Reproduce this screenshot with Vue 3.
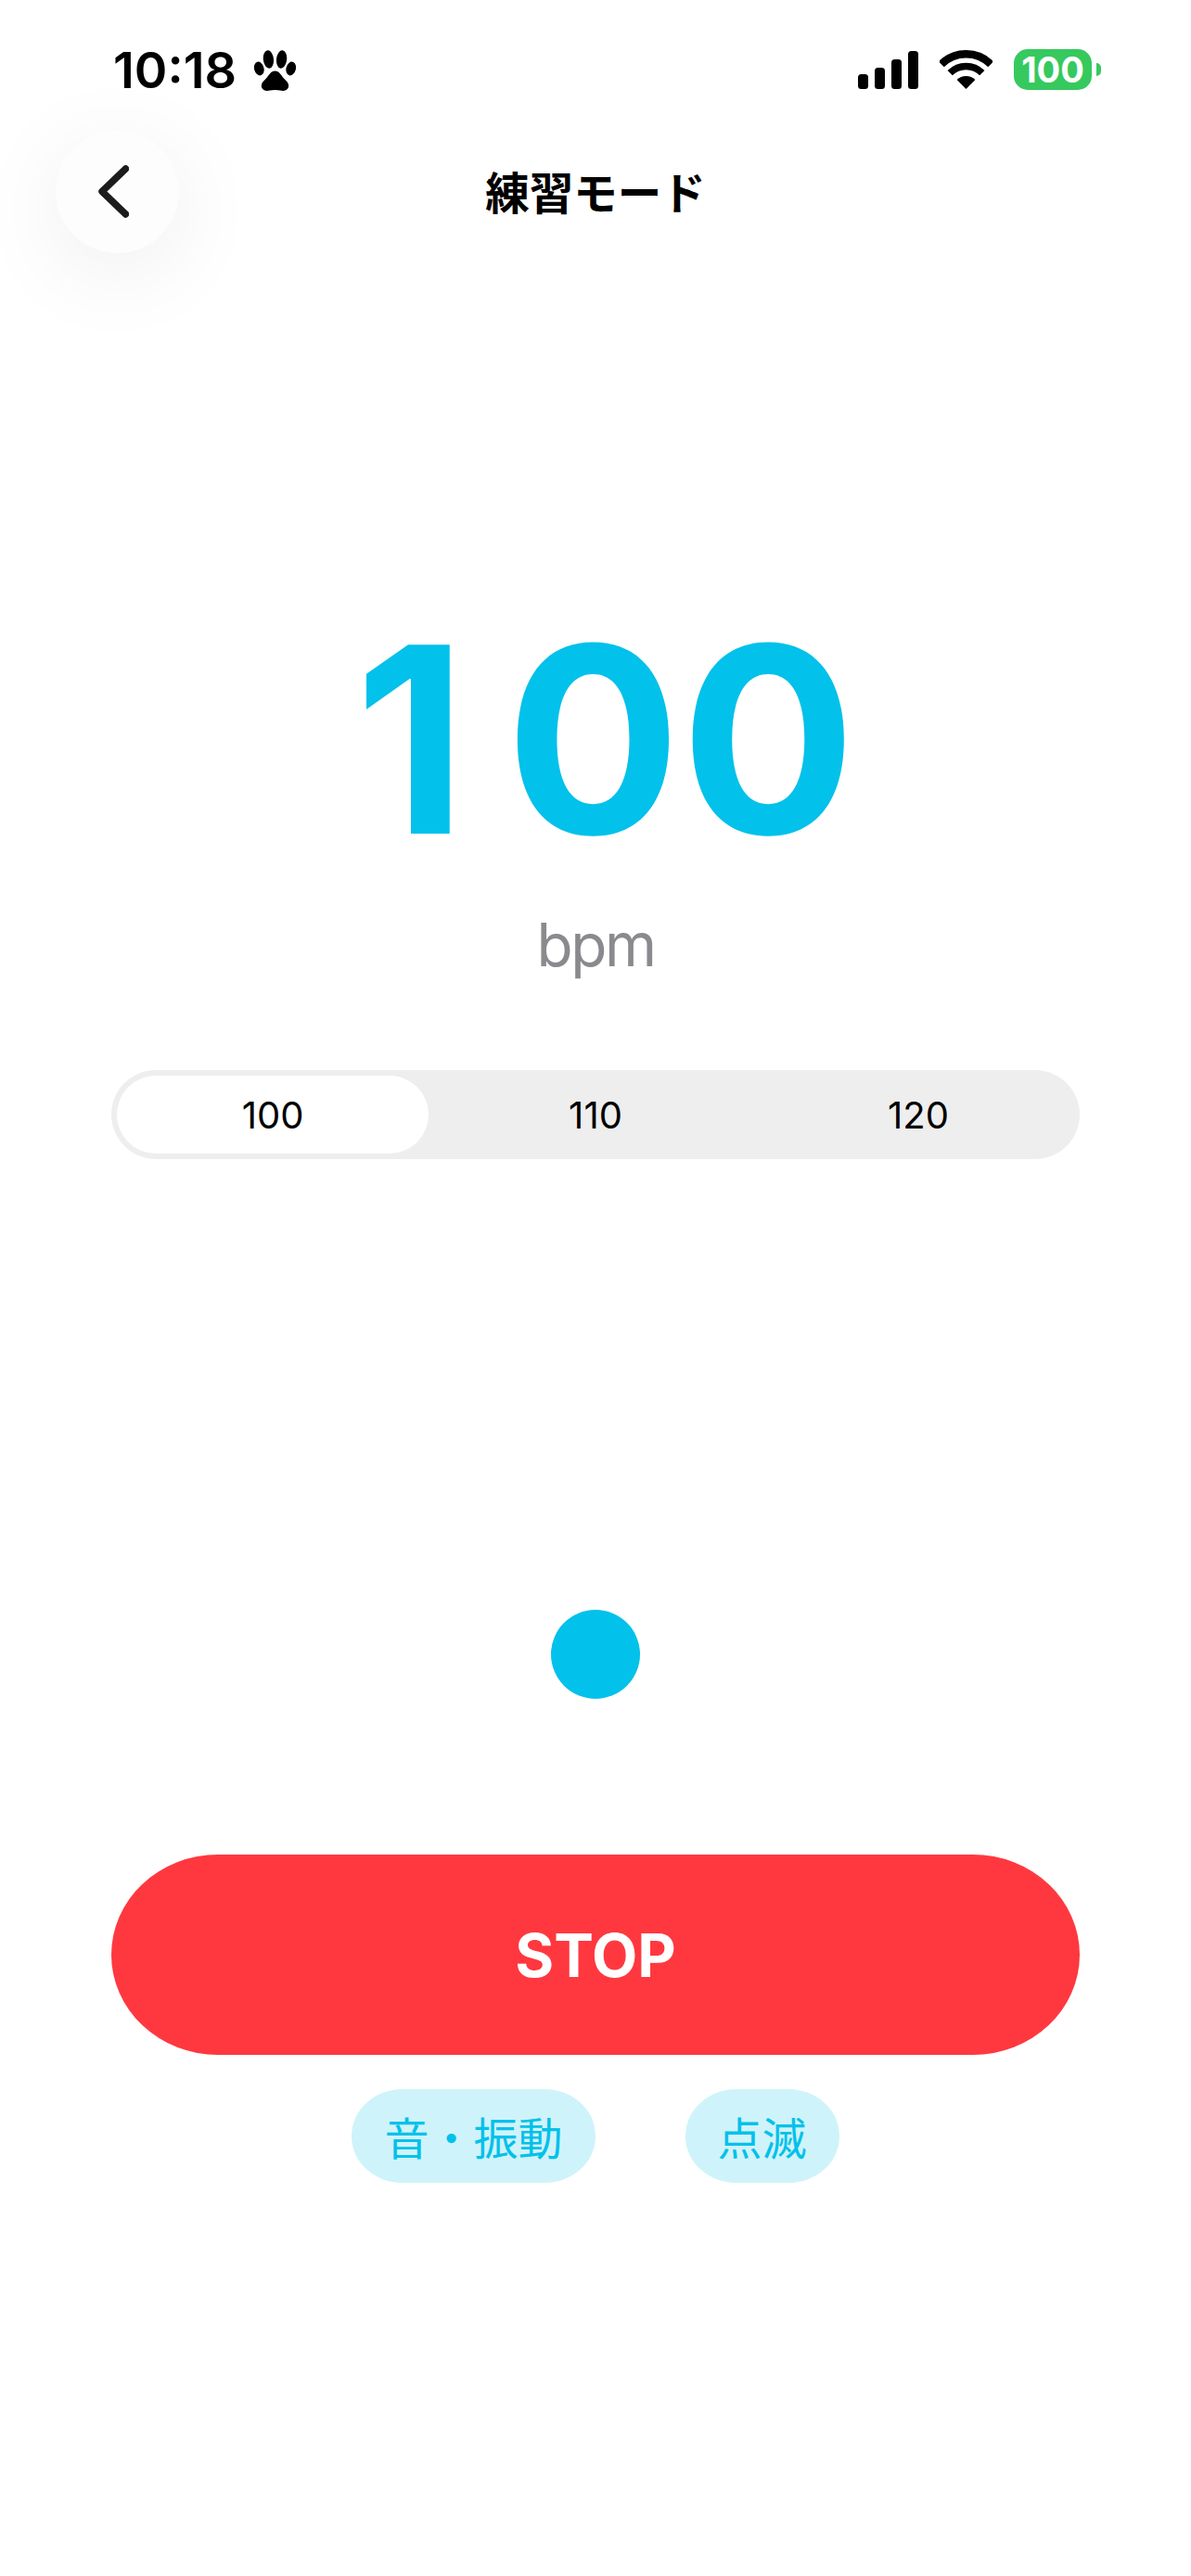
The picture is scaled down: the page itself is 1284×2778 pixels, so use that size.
<script setup>
import { ref } from 'vue';

const bpm = ref(100);
const presets = [100, 110, 120];
const signalBars = [
  { x: 0, y: 25, h: 16 },
  { x: 18, y: 18, h: 23 },
  { x: 36, y: 9, h: 32 },
  { x: 54, y: 0, h: 41 }
];
</script>

<template>
  <div class="screen">
    <div class="status-bar">
      <div class="status-left">
        <span class="time">10:18</span>
        <svg class="paw" width="45" height="44" viewBox="0 0 45 44">
          <ellipse cx="5.3" cy="20" rx="5.2" ry="7.6" transform="rotate(-14 5.3 20)" />
          <ellipse cx="15.4" cy="10" rx="5.6" ry="9.8" transform="rotate(-6 15.4 10)" />
          <ellipse cx="29.6" cy="10" rx="5.6" ry="9.8" transform="rotate(6 29.6 10)" />
          <ellipse cx="39.7" cy="20" rx="5.2" ry="7.6" transform="rotate(14 39.7 20)" />
          <path d="M22.5 22.5C27 22.5 29 27 32 30.5C35 33.5 38 36 37 40C36 44 31 44.5 28 43.5C25 42.7 20 42.7 17 43.5C14 44.5 9 44 8 40C7 36 10 33.5 13 30.5C16 27 18 22.5 22.5 22.5Z" />
        </svg>
      </div>
      <div class="status-right">
        <svg class="signal" width="65" height="41" viewBox="0 0 65 41">
          <rect
            v-for="bar in signalBars"
            :key="bar.x"
            :x="bar.x"
            :y="bar.y"
            width="11"
            :height="bar.h"
            rx="3.5"
          />
        </svg>
        <svg class="wifi" width="57" height="42" viewBox="0 0 57 42" fill="none">
          <path d="M1.77 15.27A37.8 37.8 0 0 1 55.23 15.27" stroke="#000" stroke-width="8.4" />
          <path d="M11.18 24.68A24.5 24.5 0 0 1 45.82 24.68" stroke="#000" stroke-width="7.5" />
          <path d="M28.5 42L18.6 32.1A14 14 0 0 1 38.4 32.1Z" fill="#000" />
        </svg>
        <div class="battery">
          <span class="battery-body">100</span>
          <span class="battery-nub"></span>
        </div>
      </div>
    </div>

    <header class="nav">
      <button class="back-btn">
        <svg width="33" height="57" viewBox="0 0 33 57" fill="none">
          <path d="M29.5 4L4 28.5L29.5 53" stroke="#1c1c1e" stroke-width="7.4" stroke-linecap="round" stroke-linejoin="round" />
        </svg>
      </button>
      <h1 class="title">練習モード</h1>
    </header>

    <div class="bpm-value">{{ bpm }}</div>
    <div class="bpm-unit">bpm</div>

    <div class="segments">
      <div
        v-for="preset in presets"
        :key="preset"
        class="segment"
        :class="{ active: preset === bpm }"
      >
        {{ preset }}
      </div>
    </div>

    <div class="beat-dot"></div>

    <button class="stop-btn">STOP</button>

    <div class="modes">
      <span class="mode">音・振動</span>
      <span class="mode">点滅</span>
    </div>
  </div>
</template>

<style>
html,
body {
  background: #fff;
}
</style>

<style scoped>
.screen {
  width: 1284px;
  height: 2778px;
  overflow: hidden;
  background: #fff;
  display: flex;
  flex-direction: column;
  font-family: Inter, "Noto Sans CJK JP", sans-serif;
  color: #000;
}

.status-bar {
  height: 140px;
  padding: 53px 97px 0 122px;
  box-sizing: border-box;
  display: flex;
  justify-content: space-between;
  align-items: flex-start;
}
.status-left {
  display: flex;
  align-items: center;
  height: 46px;
}
.time {
  font-size: 54px;
  font-weight: 600;
  line-height: 46px;
}
.paw {
  margin-left: 19px;
}
.status-right {
  display: flex;
  align-items: flex-start;
}
.signal {
  margin-top: 2px;
}
.wifi {
  margin: 1px 0 0 23px;
}
.battery {
  display: flex;
  align-items: center;
  margin-left: 23px;
}
.battery-body {
  width: 84px;
  height: 44px;
  border-radius: 15px;
  background: #36c95e;
  color: #fff;
  font-size: 38px;
  font-weight: 700;
  line-height: 44px;
  text-align: center;
}
.battery-nub {
  width: 5px;
  height: 14px;
  margin-left: 5px;
  border-radius: 0 6px 6px 0;
  background: #36c95e;
}

.nav {
  display: grid;
  grid-template-columns: 133px 1fr 133px;
  align-items: center;
  padding: 0 60px;
}
.back-btn {
  width: 133px;
  height: 133px;
  padding: 0;
  border: none;
  border-radius: 50%;
  background: #fdfdfd;
  box-shadow: 0 20px 100px rgba(0, 0, 0, 0.07);
  display: flex;
  align-items: center;
  justify-content: center;
}
.back-btn svg {
  margin-left: -8px;
}
.title {
  margin: 0;
  padding-bottom: 2px;
  font-size: 47.5px;
  font-weight: 700;
  line-height: 60px;
  text-align: center;
  font-family: "Noto Sans CJK JP", sans-serif;
}

.bpm-value {
  margin-top: 385px;
  padding-left: 21px;
  font-size: 280px;
  font-weight: 650;
  line-height: 280px;
  text-align: center;
  color: #02c1ea;
}
.bpm-value::first-letter {
  margin-right: 42px;
}
.bpm-unit {
  margin-top: 49px;
  font-size: 64px;
  line-height: 64px;
  letter-spacing: -2.5px;
  text-align: center;
  color: #8a8a8e;
}

.segments {
  margin: 103px 120px 0;
  height: 96px;
  border-radius: 48px;
  background: #eeeeee;
  display: grid;
  grid-template-columns: repeat(3, 1fr);
}
.segment {
  margin: 6px;
  height: 84px;
  border-radius: 42px;
  font-size: 40px;
  line-height: 86px;
  text-align: center;
}
.segment.active {
  background: #fff;
}

.beat-dot {
  width: 96px;
  height: 96px;
  margin: 486px auto 0;
  border-radius: 50%;
  background: #02c1ea;
}

.stop-btn {
  margin: 168px 120px 0;
  height: 216px;
  border: none;
  border-radius: 115px / 108px;
  background: #ff383f;
  color: #fff;
  font-family: inherit;
  font-size: 64px;
  font-weight: 700;
}

.modes {
  margin-top: 37px;
  display: flex;
  justify-content: center;
  gap: 97px;
}
.mode {
  height: 101px;
  padding: 0 35px;
  border-radius: 55px / 50px;
  background: #cff3fa;
  color: #02c1ea;
  font-family: "Noto Sans CJK JP", sans-serif;
  font-size: 48px;
  line-height: 101px;
}
</style>
